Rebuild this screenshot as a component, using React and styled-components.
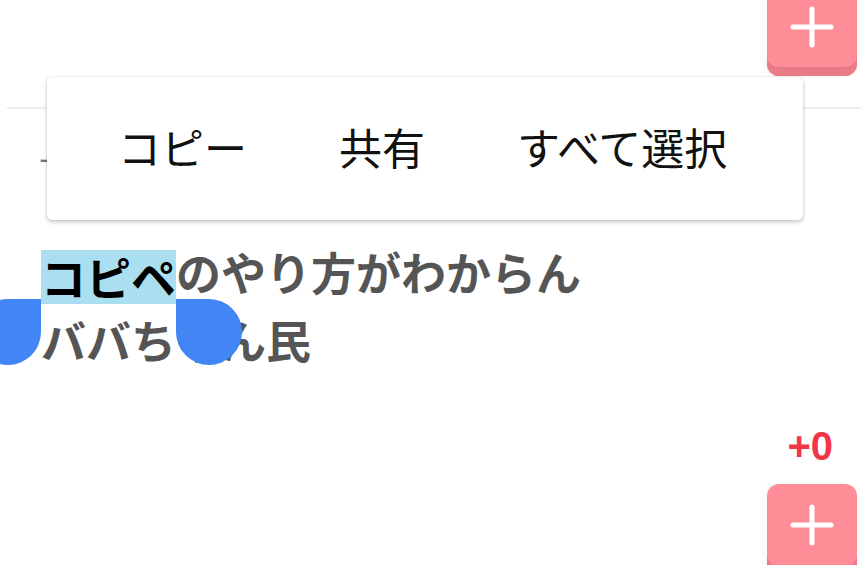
import React from "react";
import styled, { createGlobalStyle } from "styled-components";

const Global = createGlobalStyle`
  html, body { margin: 0; padding: 0; background: #fff; }
  body { font-family: "Noto Sans CJK JP", "Noto Sans", sans-serif; }
  * { box-sizing: border-box; }
`;

const Page = styled.div`
  position: relative;
  width: 861px;
  height: 565px;
  overflow: hidden;
  background: #fff;
`;

const Header = styled.div`
  height: 107px;
  display: flex;
  justify-content: flex-end;
  padding-right: 4px;
`;

const PlusButton = styled.div`
  width: 90px;
  height: 91px;
  margin-top: ${(p) => p.$offset || 0}px;
  background: #ff8d97;
  border-radius: 12px;
  box-shadow: inset 0 -9px 0 #e97b86, -3px 0 6px rgba(0, 0, 0, 0.04);
  display: flex;
  justify-content: center;
  padding-top: ${(p) => p.$iconTop}px;
`;

const Divider = styled.div`
  margin-left: 7px;
  height: 2px;
  background: #eeeeee;
`;

const MetaRow = styled.div`
  height: 129px;
  padding: 38px 0 0 38px;
  font-size: 26px;
  color: #777;
  line-height: 26px;
`;

const Body = styled.div`
  padding-left: 41px;
  font-size: 45px;
  font-weight: 700;
  color: #555;
`;

const Line = styled.div`
  position: relative;
  height: 68px;
  line-height: 68px;
  white-space: nowrap;
`;

const Selected = styled.span`
  display: inline-block;
  height: 54px;
  line-height: 54px;
  vertical-align: middle;
  margin-top: -4px;
  background: #aadff1;
  color: #000;
`;

const Handle = styled.div`
  position: absolute;
  top: -7px;
  width: 66px;
  height: 66px;
  background: #4285f4;
  left: ${(p) => p.$left}px;
  border-radius: ${(p) => (p.$side === "left" ? "50% 0 50% 50%" : "0 50% 50% 50%")};
`;

const CountRow = styled.div`
  height: 110px;
  display: flex;
  justify-content: flex-end;
  padding: 52px 28px 0 0;
  font-family: "Liberation Sans", Arial, sans-serif;
  font-weight: 700;
  font-size: 40px;
  line-height: 40px;
  color: #f2364a;
`;

const Footer = styled.div`
  display: flex;
  justify-content: flex-end;
  padding-right: 4px;
`;

const Popup = styled.div`
  position: absolute;
  left: 47px;
  top: 77px;
  width: 756px;
  height: 143px;
  background: #fff;
  border-radius: 5px;
  box-shadow: 0 2px 4px rgba(0, 0, 0, 0.22), 0 0 2px rgba(0, 0, 0, 0.12);
  display: flex;
  align-items: center;
  padding: 0 25px 6px;
`;

const MenuItem = styled.div`
  padding: 0 ${(p) => p.$pad}px;
  font-size: 43px;
  font-weight: 400;
  color: #111;
  line-height: 50px;
  white-space: nowrap;
`;

const PlusIcon = () => (
  <svg width="44" height="42" viewBox="0 0 44 42">
    <path d="M22 3 V39 M3 21 H41" stroke="#fff" strokeWidth="5" strokeLinecap="round" fill="none" />
  </svg>
);

export default function App() {
  return (
    <>
      <Global />
      <Page>
        <Header>
          <PlusButton $offset={-15} $iconTop={21}>
            <PlusIcon />
          </PlusButton>
        </Header>
        <Divider />
        <MetaRow>ーー</MetaRow>
        <Body>
          <Line>
            <Selected>コピペ</Selected>のやり方がわからん
          </Line>
          <Line>
            ババちゃん民
            <Handle $side="left" $left={-66} />
            <Handle $side="right" $left={135} />
          </Line>
        </Body>
        <CountRow>+0</CountRow>
        <Footer>
          <PlusButton $iconTop={20}>
            <PlusIcon />
          </PlusButton>
        </Footer>
        <Popup>
          <MenuItem $pad={46}>コピー</MenuItem>
          <MenuItem $pad={46}>共有</MenuItem>
          <MenuItem $pad={46}>すべて選択</MenuItem>
        </Popup>
      </Page>
    </>
  );
}
